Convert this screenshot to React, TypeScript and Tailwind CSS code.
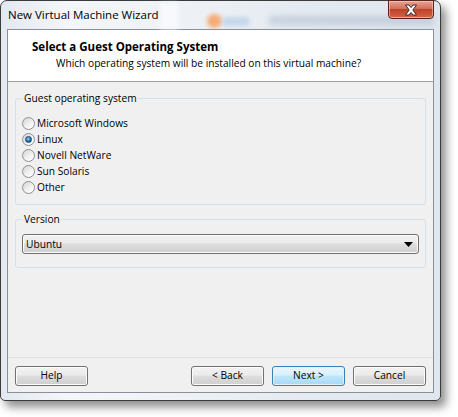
import React from "react";

const font = { fontFamily: '"Open Sans", "Noto Sans", sans-serif' };

function Radio({ label, checked }: { label: string; checked?: boolean }) {
  return (
    <div className="flex items-center h-[16px]">
      <div className="w-[13px] h-[13px] rounded-full border border-[#8e8f8f] bg-[linear-gradient(135deg,#d4d4d4,#f4f4f4_60%,#ffffff)] flex items-center justify-center">
        {checked && (
          <div className="w-[7px] h-[7px] rounded-full bg-[radial-gradient(circle_at_40%_35%,#8fd0f5,#1f6fb0_60%,#0d4680)] border border-[#10406d]" />
        )}
      </div>
      <span className="ml-[2px] text-[10.2px] text-black leading-none">{label}</span>
    </div>
  );
}

function Btn({ label, primary }: { label: string; primary?: boolean }) {
  return (
    <div
      className={
        "w-[73px] h-[20px] rounded-[3px] border flex items-center justify-center text-[10.2px] text-black " +
        (primary
          ? "border-[#3c7fb1] bg-[linear-gradient(#eaf6fd_0%,#d9f0fc_45%,#bee6fd_50%,#a7d9f5_100%)] shadow-[inset_0_0_0_1px_#dff2fc]"
          : "border-[#707070] bg-[linear-gradient(#f2f2f2_0%,#ebebeb_45%,#dddddd_50%,#cfcfcf_100%)] shadow-[inset_0_0_0_1px_#fcfcfc]")
      }
    >
      {label}
    </div>
  );
}

export default function App() {
  return (
    <div className="w-[458px] h-[417px] bg-white overflow-hidden" style={font}>
      <div className="w-[441px] h-[401px] border border-[#3b3b3b] rounded-t-[7px] rounded-b-[5px] bg-[linear-gradient(90deg,#e3e9f0_0%,#f4f6f9_15%,#eef2f6_40%,#e4eaf1_70%,#dfe6ee_100%)] shadow-[5px_6px_10px_rgba(0,0,0,0.45)] flex flex-col relative">
        {/* title bar */}
        <div className="h-[28px] flex items-start relative">
          <div className="absolute left-[159px] top-[2px] w-[18px] h-[26px] bg-[#f7f9fc] blur-[2px]" />
          <div className="absolute left-[206px] top-[13px] w-[15px] h-[14px] rounded-full bg-[#f6a66a] blur-[2px] opacity-90" />
          <div className="absolute left-[222px] top-[16px] w-[26px] h-[9px] bg-[#bcd2ea] blur-[2px] opacity-80" />
          <div className="absolute left-[268px] top-[15px] w-[165px] h-[9px] bg-[#b8c4d3] blur-[3px] opacity-70" />
          <span className="relative ml-[7px] mt-[7px] text-[11.5px] leading-[14px] text-black">New Virtual Machine Wizard</span>
          <div className="relative ml-auto mr-[6px] w-[46px] h-[19px] -mt-px rounded-b-[4px] border border-[#5a231b] bg-[linear-gradient(#e8a493_0%,#d0705a_45%,#c0412a_50%,#cf5c3f_90%,#e08a6a_100%)] flex items-center justify-center shadow-[inset_0_0_0_1px_rgba(255,220,210,0.5)]">
            <svg width="14" height="12" viewBox="0 0 14 12">
              <path
                d="M1.5 1 H5 L7 3.5 L9 1 H12.5 L8.8 6 L12.5 11 H9 L7 8.5 L5 11 H1.5 L5.2 6 Z"
                fill="#ffffff"
                stroke="#3a2a2a"
                strokeWidth="1"
                strokeLinejoin="round"
              />
            </svg>
          </div>
        </div>
        {/* client */}
        <div className="mx-[6px] h-[364px] border border-[#8a9099] bg-[#f0f0f0] flex flex-col">
          <div className="h-[52px] bg-white border-b border-[#a0a0a0] flex flex-col">
            <div className="ml-[24px] mt-[10px] text-[11.5px] font-bold leading-[14px] text-black">Select a Guest Operating System</div>
            <div className="ml-[48px] mt-[2px] text-[10.2px] leading-[14px] text-black">Which operating system will be installed on this virtual machine?</div>
          </div>
          <fieldset className="mx-[7px] mt-[9px] h-[114px] border border-[#d5dfe5] rounded-[3px] pl-[6px] pt-[9px] flex flex-col">
            <legend className="ml-[1px] px-[1px] text-[10.2px] leading-[15px] text-black">Guest operating system</legend>
            <Radio label="Microsoft Windows" />
            <Radio label="Linux" checked />
            <Radio label="Novell NetWare" />
            <Radio label="Sun Solaris" />
            <Radio label="Other" />
          </fieldset>
          <fieldset className="mx-[7px] mt-[7px] h-[56px] border border-[#d5dfe5] rounded-[3px] px-[6px] pt-[7px]">
            <legend className="ml-[1px] px-[1px] text-[10.2px] leading-[15px] text-black">Version</legend>
            <div className="h-[20px] rounded-[3px] border border-[#707070] bg-[linear-gradient(#f2f2f2_0%,#ebebeb_45%,#dddddd_50%,#cfcfcf_100%)] shadow-[inset_0_0_0_1px_#fcfcfc] flex items-center pl-[3px] pr-[5px]">
              <span className="text-[10.2px] leading-none text-black">Ubuntu</span>
              <svg className="ml-auto" width="9" height="5" viewBox="0 0 9 5">
                <path d="M0 0 H9 L4.5 5 Z" fill="#000" />
              </svg>
            </div>
          </fieldset>
          <div className="flex-1" />
          <div className="h-[35px] border-t border-[#dfdfdf] flex items-start pt-[8px] px-[7px]">
            <Btn label="Help" />
            <div className="flex-1" />
            <div className="flex gap-[8px]">
              <Btn label="< Back" />
              <Btn label="Next >" primary />
              <Btn label="Cancel" />
            </div>
          </div>
        </div>
      </div>
    </div>
  );
}
